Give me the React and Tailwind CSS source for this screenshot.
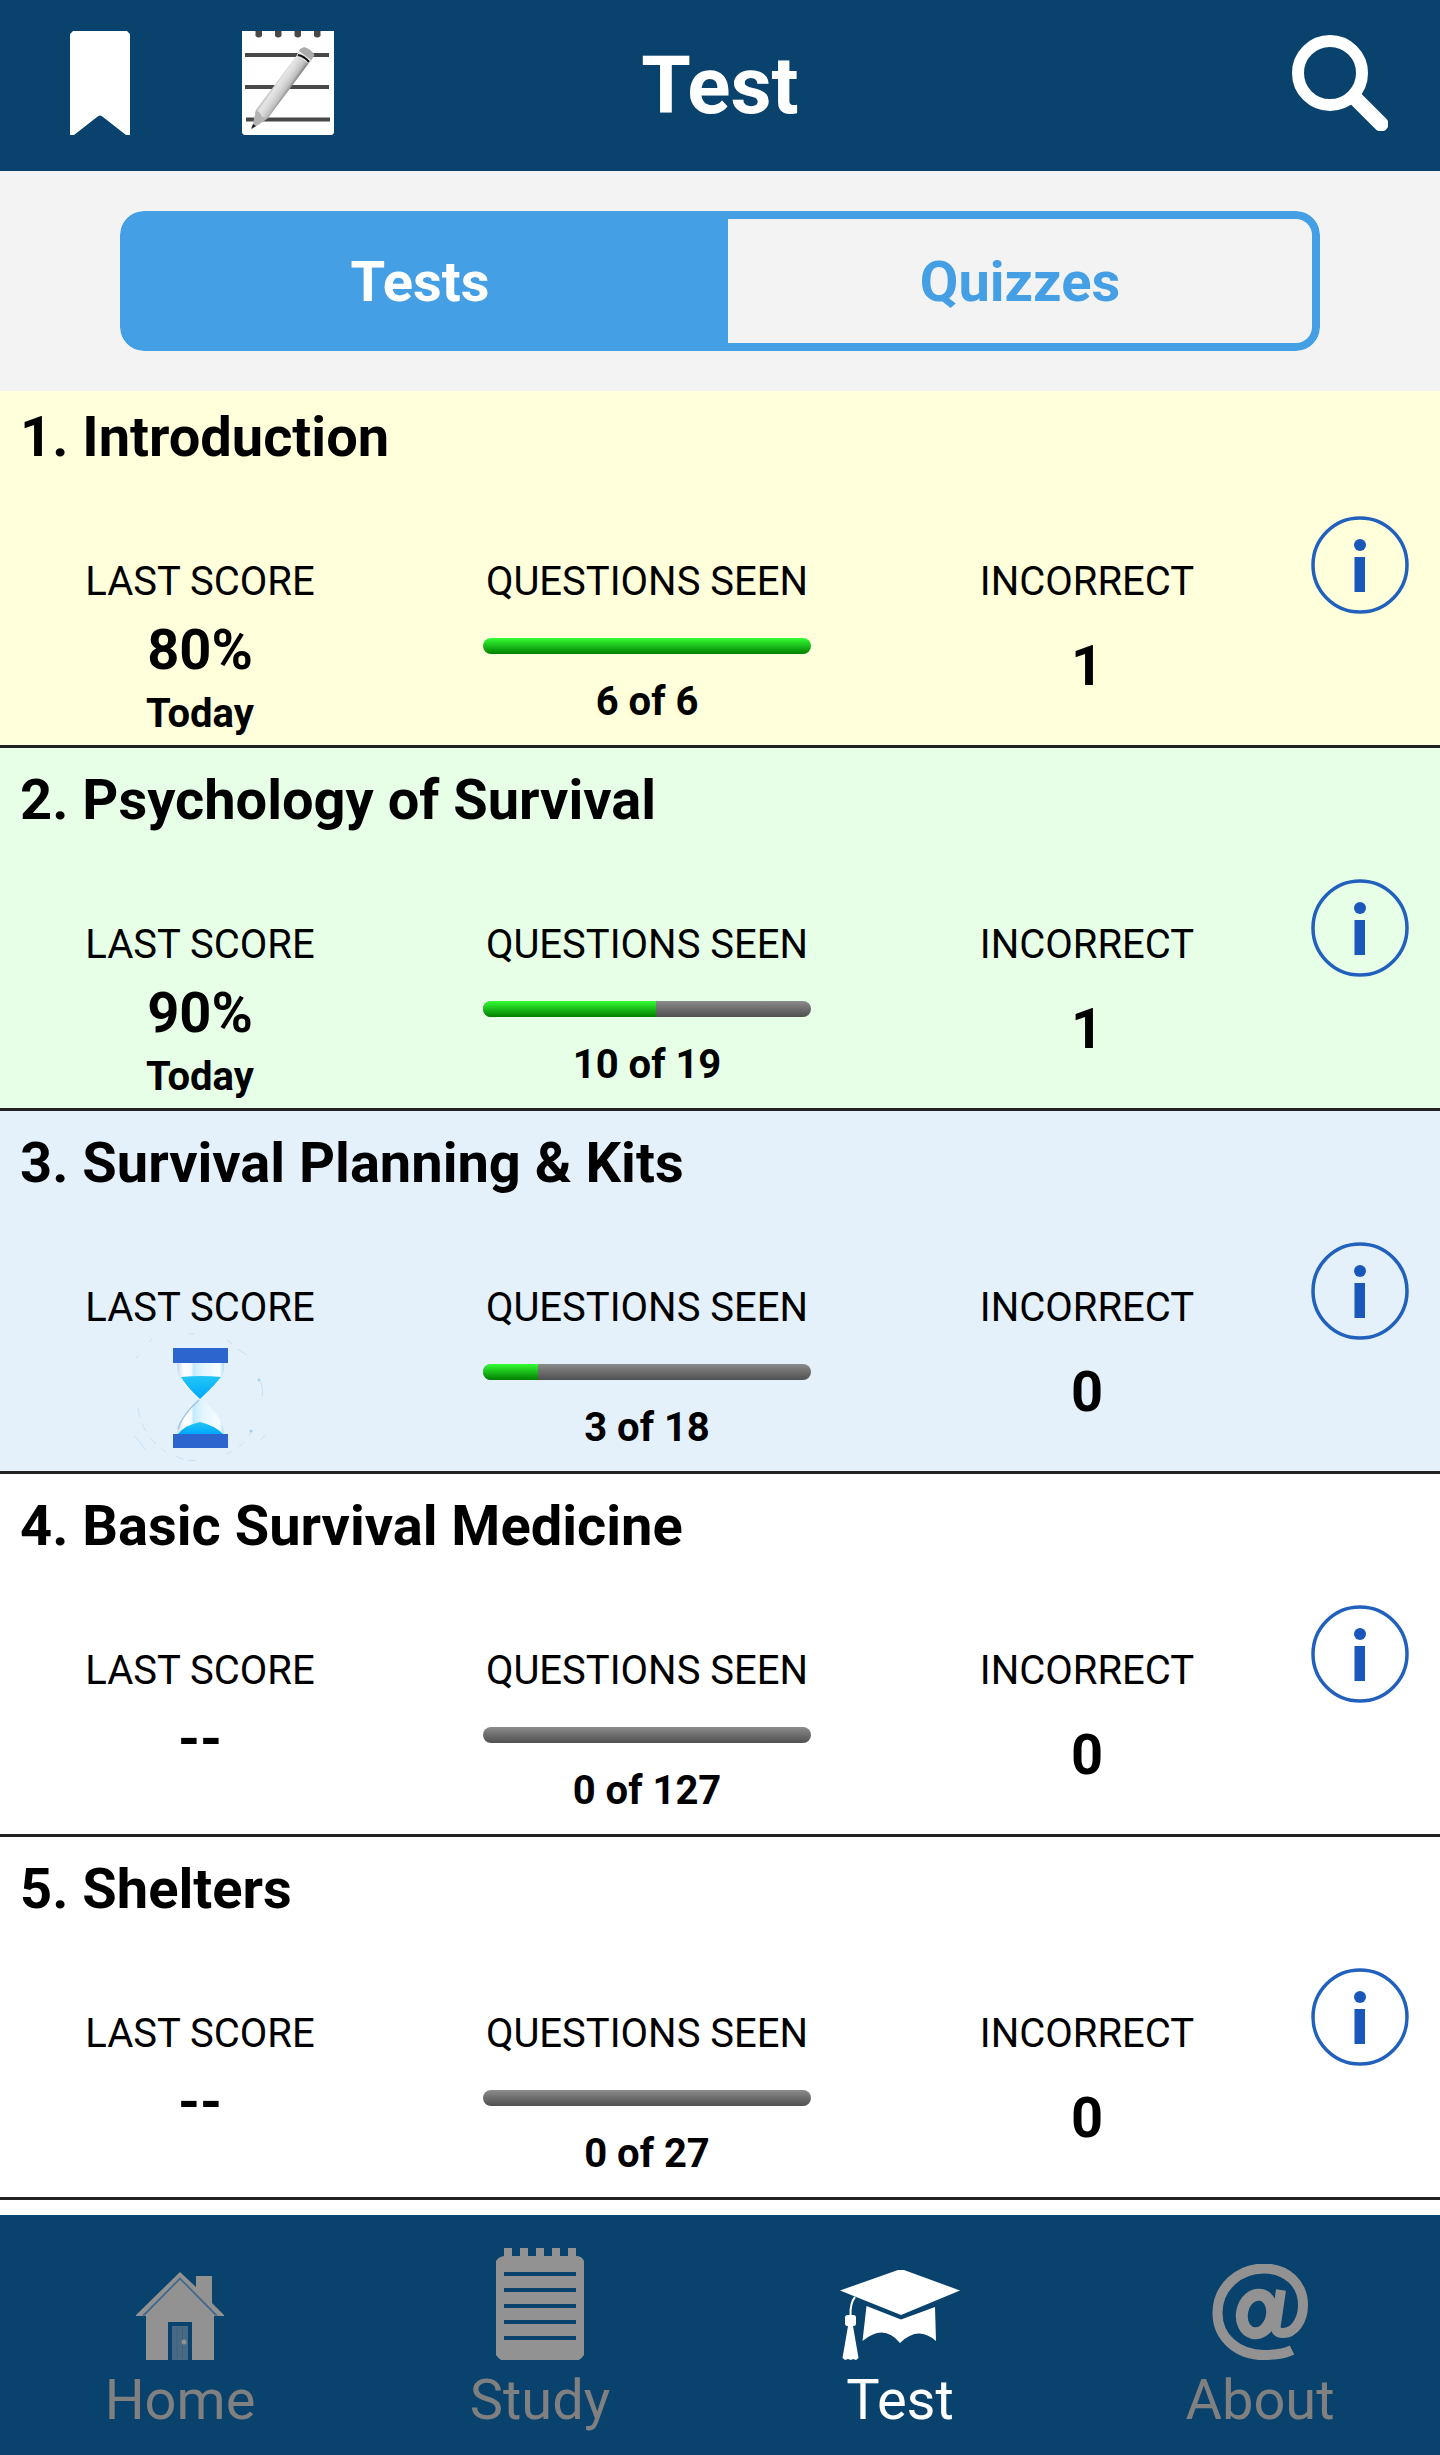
import React, { useState } from 'react'

const chapters = [
  { title: "Introduction", score: "80%", date: "Today", seen: 6, total: 6, incorrect: 1, bg: "bg-[#ffffdb]" },
  { title: "Psychology of Survival", score: "90%", date: "Today", seen: 10, total: 19, incorrect: 1, bg: "bg-[#e6ffe6]" },
  { title: "Survival Planning & Kits", inProgress: true, seen: 3, total: 18, incorrect: 0, bg: "bg-[#e4f1fb]" },
  { title: "Basic Survival Medicine", score: "--", seen: 0, total: 127, incorrect: 0, bg: "bg-white" },
  { title: "Shelters", score: "--", seen: 0, total: 27, incorrect: 0, bg: "bg-white" },
]

const BookmarkIcon = () => (
  <svg className="w-[60px] h-[104px]" viewBox="0 0 60 104" aria-hidden="true">
    <path d="M3 0H57L60 3V104H56L33 86Q30 83 27 86L4 104H0V3Z" fill="#fff" />
  </svg>
)

const NotesIcon = () => (
  <svg className="w-[92px] h-[104px]" viewBox="0 0 92 104" aria-hidden="true">
    <defs>
      <linearGradient id="pencil" x1="34" y1="50" x2="47" y2="59" gradientUnits="userSpaceOnUse">
        <stop offset="0" stopColor="#b4b4b4" />
        <stop offset="0.2" stopColor="#e6e6e6" />
        <stop offset="0.5" stopColor="#d8d8d8" />
        <stop offset="0.8" stopColor="#c0c0c0" />
        <stop offset="1" stopColor="#8c8c8c" />
      </linearGradient>
    </defs>
    <path d="M0 0H92V102L90 104H2L0 102Z" fill="#fff" />
    <g fill="#484848">
      <path d="M13.500 0h6.500v5q-3.200 3-6.500 0zM33 0h6.500v5q-3.200 3-6.500 0zM52.500 0h6.500v5q-3.200 3-6.500 0zM72 0h6.500v5q-3.200 3-6.500 0z" />
      <path d="M3 22h84v4H3zM3 54h84v4H3zM4 86.500h84v4H4z" />
    </g>
    <path d="M55 24L67 32L26 87L10 98L14 79Z" fill="url(#pencil)" />
    <path d="M14 79L18 82L20 86L26 87L10 98Z" fill="#b3b3b3" />
    <path d="M11 93L14 95L9 98Z" fill="#222" />
    <path d="M58 18L62 16Q69 18 72.500 24L67 33L55 24Z" fill="#ababab" />
    <path d="M57 20L69 29L67 33L55 24Z" fill="#ececec" />
    <path d="M56 24Q62 25 67 31" stroke="#111" strokeWidth="2" fill="none" />
  </svg>
)

const SearchIcon = () => (
  <svg className="w-24 h-24" viewBox="0 0 96 96" fill="none" stroke="#fff" aria-hidden="true">
    <circle cx="38" cy="38" r="32" strokeWidth="12" />
    <path d="M62 62L89 89" strokeWidth="15" strokeLinecap="round" />
  </svg>
)

const InfoIcon = () => (
  <svg className="w-[98px] h-[98px]" viewBox="0 0 98 98" aria-hidden="true">
    <circle cx="49" cy="49" r="47" fill="none" stroke="#2260bd" strokeWidth="3.500" />
    <circle cx="49" cy="29" r="6" fill="#1957bb" />
    <rect x="43.500" y="41" width="10.500" height="35" fill="#1957bb" />
  </svg>
)

const HourglassIcon = () => (
  <svg className="w-[132px] h-[132px]" viewBox="0 0 132 132" role="img" aria-label="In progress">
    <defs>
      <linearGradient id="glass">
        <stop offset="0" stopColor="#c6daee" />
        <stop offset="0.15" stopColor="#fff" />
        <stop offset="0.3" stopColor="#f4faff" />
        <stop offset="0.35" stopColor="#c4ebfc" />
        <stop offset="0.55" stopColor="#e2f6fe" />
        <stop offset="0.9" stopColor="#f8fdff" />
        <stop offset="1" stopColor="#b0def4" />
      </linearGradient>
      <linearGradient id="sand" x2="0" y2="1">
        <stop offset="0" stopColor="#22c6f5" />
        <stop offset="1" stopColor="#00a8fb" />
      </linearGradient>
    </defs>
    <g fill="none" stroke="#c6e2f7" strokeWidth="1">
      <path d="M4 76Q8 104 32 120" strokeDasharray="9 7" />
      <path d="M42 124Q52 130 66 128" strokeDasharray="8 5" />
      <path d="M92 122Q112 114 119 96" strokeDasharray="6 9" />
      <path d="M125 46Q130 56 128 64" />
      <path d="M93 8L98 12M54 2H60M15 10L18 7M2 26L5 23M1 104L11 117M131 103L127 108M104 17L113 23" />
    </g>
    <circle cx="117" cy="99" r="1.500" fill="#a5cdec" />
    <circle cx="125" cy="48" r="1.500" fill="#b0d2f0" />
    <path d="M43 31H90C91 46 86 49 67 67C83 80 90 91 90 102H43C44 91 52 78 66 67C46 50 43 46 43 31Z" fill="url(#glass)" />
    <path d="M47 45Q67 43 87 45Q82 52 66 67Q51 53 47 45Z" fill="url(#sand)" />
    <path d="M44 102Q51 93 66 90Q82 94 89 102Z" fill="url(#sand)" />
    <path d="M65 68Q48 83 44 97" stroke="#9fc4e4" strokeWidth="1.500" fill="none" />
    <path d="M39 16H94V31H39ZM39 102H94V116H39Z" fill="#2b65cd" />
  </svg>
)

const HomeIcon = () => (
  <svg className="w-[88px] h-[88px]" viewBox="0 0 88 88" aria-hidden="true">
    <path d="M44 0L60 15V4H76V31L88 43V44H78V88H10V44H0V43Z" fill="#929292" />
    <path d="M7 44L44 6.500L81 44" fill="none" stroke="#45698a" strokeWidth="1.800" />
    <path d="M32 50H56V88H32Z" fill="#08426d" />
    <path d="M36 54H52V88H36Z" fill="#486a85" />
    <path d="M41 55V87M46.500 55V87" stroke="#3d617f" />
    <circle cx="48" cy="70" r="2.500" fill="#929292" />
  </svg>
)

const StudyIcon = () => (
  <svg className="w-[88px] h-[112px]" viewBox="0 0 88 112" aria-hidden="true">
    <path d="M8 0h8v8h8V0h8v8h8V0h8v8h8V0h8v8h8V0h8v8Q86 8 88 13V107Q86 110 83 112H5Q2 110 0 107V13Q2 9 8 8Z" fill="#929292" />
    <path d="M8 26H80M8 42H80M8 58H80M8 74H80M8 90H80" stroke="#08426d" strokeWidth="4" />
  </svg>
)

const TestIcon = () => (
  <svg className="w-[120px] h-[90px]" viewBox="0 0 120 90" fill="#fff" aria-hidden="true">
    <path d="M58 0H64L120 20.500L61 45L0 20.500Z" />
    <path d="M26.500 36L61 49.500L95 37L96 71Q78 55 60 73Q44 53 22.500 71Z" />
    <path d="M15 27Q10 33 10.500 46" fill="none" stroke="#fff" strokeWidth="2" />
    <rect x="5" y="45" width="11" height="11" rx="2.500" />
    <path d="M8 56H13L18.500 88L16 90L13 89L11 90L8 89L5 90L2.500 88Z" />
  </svg>
)

const AboutIcon = () => (
  <svg className="w-24 h-24" viewBox="0 0 96 96" fill="none" stroke="#929292" aria-hidden="true">
    <path d="M80 86C72 90 62 91 52 91C26 91 5.500 74 5.500 49C5.500 23 27 4.500 52 4.500C75 4.500 91 20 91 41C91 57 82 69 71 69C65 69 63 66 64 60L69 26" strokeWidth="10" />
    <ellipse cx="45" cy="50" rx="15" ry="19.500" strokeWidth="12" transform="rotate(12 45 50)" />
  </svg>
)

const navItems = [
  { label: "Home", icon: HomeIcon },
  { label: "Study", icon: StudyIcon },
  { label: "Test", icon: TestIcon },
  { label: "About", icon: AboutIcon },
]

function ChapterRow({ chapter, number }) {
  const { title, score, date, inProgress, seen, total, incorrect, bg } = chapter
  return (
    <li className={`min-h-[363px] pt-5 pb-[7px] border-b-3 border-[#222] ${bg}`}>
      <h2 className="px-5 text-[56px] leading-16 font-bold">{number}. {title}</h2>

      <div className="mt-[47px] grid grid-cols-[400fr_494fr_386fr_160fr] whitespace-nowrap">
        {/* Last score */}
        <div className="pt-[42px] flex flex-col items-center">
          <p className="text-[40px] leading-12">LAST SCORE</p>
          {inProgress
            ? <HourglassIcon />
            : <p className="mt-3 text-[56px] leading-16 font-bold">{score}</p>
          }
          {date && <p className="mt-2 text-[40px] leading-12 font-bold">{date}</p>}
        </div>

        {/* Questions seen */}
        <div className="pt-[42px] flex flex-col items-center">
          <p className="text-[40px] leading-12">QUESTIONS SEEN</p>
          <div
            role="progressbar"
            aria-label={`${title} questions seen`}
            aria-valuenow={seen}
            aria-valuemax={total}
            className="mt-8 w-[328px] h-4 rounded-full overflow-hidden bg-linear-to-b from-[#8c8c8c] to-[#505050]"
          >
            <div className="h-full bg-linear-to-b from-[#33ff33] to-[#008000]" style={{ width: `${(seen / total) * 100}%` }} />
          </div>
          <p className="mt-6 text-[40px] leading-12 font-bold">{seen} of {total}</p>
        </div>

        {/* Incorrect */}
        <div className="pt-[42px] flex flex-col items-center">
          <p className="text-[40px] leading-12">INCORRECT</p>
          <p className="mt-7 text-[56px] leading-16 font-bold">{incorrect}</p>
        </div>

        <div className="flex items-start justify-center">
          <button aria-label={`About ${title}`} className="cursor-pointer">
            <InfoIcon />
          </button>
        </div>
      </div>
    </li>
  )
}

function App() {
  const [tab, setTab] = useState("Tests")

  return (
    <div className="min-h-screen flex flex-col bg-white text-black font-['Roboto',sans-serif]">
      {/* Header */}
      <header className="h-[171px] grid grid-cols-[1fr_auto_1fr] items-center bg-[#08426d] px-[52px]">
        <div className="flex items-center gap-28 pl-[18px] pb-1.5">
          <button aria-label="Bookmarks" className="cursor-pointer"><BookmarkIcon /></button>
          <button aria-label="Notes" className="cursor-pointer"><NotesIcon /></button>
        </div>
        <h1 className="text-white text-[80px] leading-24 font-bold">Test</h1>
        <div className="flex justify-end pb-1.5">
          <button aria-label="Search" className="cursor-pointer"><SearchIcon /></button>
        </div>
      </header>

      {/* Tests / Quizzes switch */}
      <div className="relative z-10 bg-[#f3f3f3] px-30 py-10">
        <div className="h-35 grid grid-cols-2 rounded-3xl overflow-hidden">
          {["Tests", "Quizzes"].map(name => (
            <button
              key={name}
              onClick={() => setTab(name)}
              className={`pt-0.5 border-8 border-[#459fe4] text-[56px] leading-16 font-bold cursor-pointer first:rounded-l-3xl last:rounded-r-3xl ${tab === name ? 'bg-[#459fe4] text-white' : 'bg-[#f3f3f3] text-[#459fe4]'}`}
            >
              {name}
            </button>
          ))}
        </div>
      </div>

      {/* Chapters, the first one is scrolled slightly under the switch */}
      <main className="grow -mt-1.5 pb-[15px]">
        <ul>
          {chapters.map((chapter, i) => (
            <ChapterRow key={chapter.title} chapter={chapter} number={i + 1} />
          ))}
        </ul>
      </main>

      {/* Bottom nav */}
      <nav className="grid grid-cols-4 bg-[#08426d] pb-[23px]">
        {navItems.map(({ label, icon: Icon }) => (
          <a
            key={label}
            href={`#${label.toLowerCase()}`}
            className={`flex flex-col items-center gap-2 text-[56px] leading-16 ${label === "Test" ? 'text-white' : 'text-[#808080]'}`}
          >
            <span className="h-[145px] flex items-end"><Icon /></span>
            {label}
          </a>
        ))}
      </nav>
    </div>
  )
}

export default App
